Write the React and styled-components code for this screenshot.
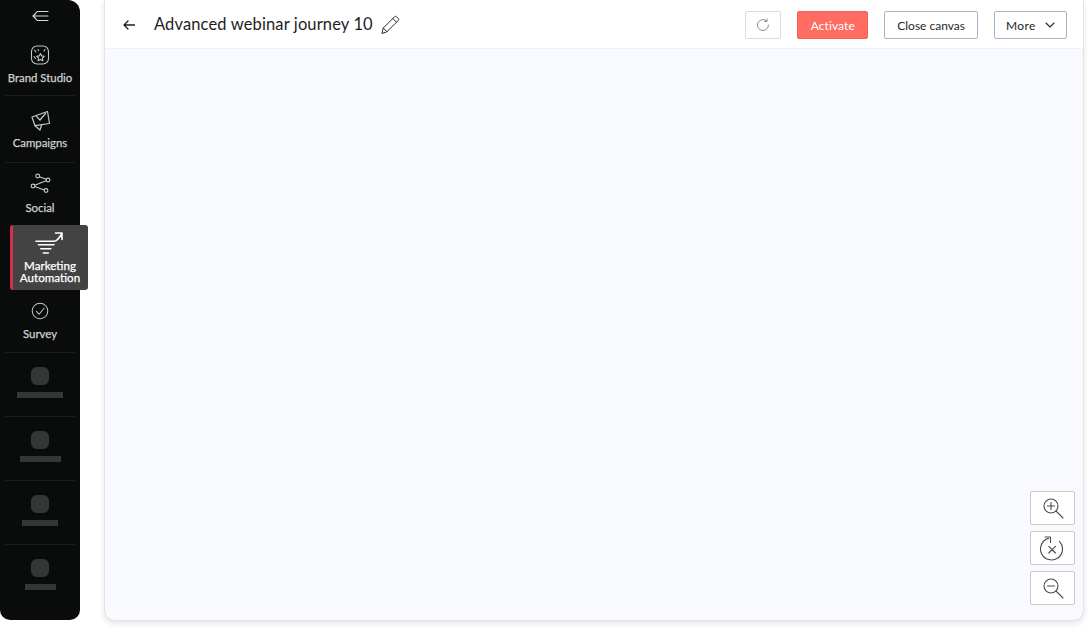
import React from 'react';
import styled, { createGlobalStyle } from 'styled-components';

const GlobalStyle = createGlobalStyle`
  html, body {
    margin: 0;
    padding: 0;
    background: #fff;
    font-family: 'Lato', 'Liberation Sans', sans-serif;
  }
`;

const Page = styled.div`
  display: flex;
  width: 1088px;
  height: 629px;
  overflow: hidden;
`;

const Sidebar = styled.nav`
  flex: none;
  width: 80px;
  height: 620px;
  display: flex;
  flex-direction: column;
  background: #0a0c0c;
  border-radius: 0 12px 10px 10px;
`;

const Toggle = styled.div`
  height: 32px;
  display: flex;
  justify-content: center;
  align-items: flex-start;
  padding-top: 9px;
  box-sizing: border-box;
  color: #d8d8d8;
`;

const NavItem = styled.div`
  height: ${(p) => p.$h}px;
  margin: 0 5px;
  box-sizing: border-box;
  display: flex;
  flex-direction: column;
  align-items: center;
  padding-top: ${(p) => p.$top || 12}px;
  color: #cfd1d1;
  border-bottom: 1px solid ${(p) => (p.$plain ? 'transparent' : '#1b1d1d')};
`;

const NavIcon = styled.div`
  height: 22px;
  display: flex;
  align-items: center;
  justify-content: center;
  color: #c6c8c8;
`;

const NavLabel = styled.div`
  margin-top: 4px;
  font-size: 11.4px;
  font-weight: 400;
  line-height: 15px;
  white-space: nowrap;
  -webkit-text-stroke: 0.25px currentColor;
`;

const ActiveItem = styled.div`
  flex: none;
  height: 65px;
  width: 78px;
  margin: 0 -8px 0 10px;
  position: relative;
  box-sizing: border-box;
  display: flex;
  flex-direction: column;
  align-items: center;
  padding: 3px 1px 0 0;
  background: #434343;
  border-left: 3px solid #d2334c;
  border-radius: 3px;
  color: #fff;
`;

const ActiveLabel = styled.div`
  margin-top: 2px;
  font-size: 11.6px;
  font-weight: 400;
  line-height: 12px;
  text-align: center;
  white-space: nowrap;
  -webkit-text-stroke: 0.25px currentColor;
`;

const SkeletonItem = styled.div`
  height: 64px;
  margin: 0 5px;
  box-sizing: border-box;
  display: flex;
  flex-direction: column;
  align-items: center;
  padding-top: 14px;
  border-bottom: 1px solid ${(p) => (p.$last ? 'transparent' : '#1b1d1d')};
`;

const SkeletonIcon = styled.div`
  width: 18px;
  height: 18px;
  border-radius: 6px;
  background: #353736;
`;

const SkeletonBar = styled.div`
  width: ${(p) => p.$w}px;
  height: 6px;
  margin-top: 7px;
  background: #353736;
`;

const Panel = styled.main`
  flex: none;
  position: relative;
  width: 980px;
  height: 621px;
  margin-left: 24px;
  box-sizing: border-box;
  display: flex;
  flex-direction: column;
  background: #f8faff;
  border: 1px solid #e3e3e6;
  border-top: none;
  border-radius: 0 0 10px 10px;
  box-shadow: 0 3px 6px rgba(0, 0, 0, 0.1);
`;

const Header = styled.header`
  flex: none;
  height: 49px;
  display: flex;
  align-items: center;
  padding: 2px 16px 0 17px;
  background: #fff;
  border-bottom: 1px solid #f1f2f6;
  box-sizing: border-box;
`;

const Title = styled.h1`
  margin: 0 7px 2px 18px;
  font-size: 16.5px;
  font-weight: 400;
  letter-spacing: 0.13px;
  color: #1d1d1f;
`;

const Actions = styled.div`
  margin-left: auto;
  display: flex;
  align-items: center;
  gap: 16px;
`;

const Button = styled.button`
  height: 28px;
  padding: 0 12px;
  display: flex;
  align-items: center;
  gap: 9px;
  box-sizing: border-box;
  font-family: inherit;
  font-size: 12px;
  color: #26272b;
  background: #fff;
  border: 1px solid #a7b4c9;
  border-radius: 2px;
`;

const MoreButton = styled(Button)`
  width: 73px;
  padding: 0 0 0 11px;
  letter-spacing: 0.4px;
`;

const ActivateButton = styled(Button)`
  width: 71px;
  padding: 0;
  justify-content: center;
  color: #fff;
  background: #ff6d62;
  border-color: #f0635a;
  letter-spacing: 0.1px;
`;

const RefreshButton = styled(Button)`
  width: 36px;
  padding: 0;
  justify-content: center;
  border-color: #dcdcdc;
  color: #8c8c8c;
`;

const ZoomControls = styled.div`
  position: absolute;
  right: 8px;
  bottom: 15px;
  display: flex;
  flex-direction: column;
  gap: 6px;
`;

const ZoomButton = styled.div`
  width: 45px;
  height: 34px;
  box-sizing: border-box;
  display: flex;
  align-items: center;
  justify-content: center;
  background: #fff;
  border: 1px solid #c9c9c9;
  border-radius: 2px;
  color: #4a4a4a;
`;

const Icon = ({ width = 24, height = 24, box = '0 0 24 24', w = 1.1, children }) => (
  <svg width={width} height={height} viewBox={box} fill="none" stroke="currentColor" strokeWidth={w} strokeLinecap="round" strokeLinejoin="round">
    {children}
  </svg>
);

const skeletonWidths = [46, 41, 36, 31];

export default function App() {
  return (
    <Page>
      <GlobalStyle />
      <Sidebar>
        <Toggle>
          <svg width="17" height="14" viewBox="0 0 17 14" fill="none" stroke="currentColor" strokeWidth="1.1" strokeLinecap="round" strokeLinejoin="round">
            <path d="M5 2.5h11M1 7h15M5 11.5h11M4.5 3.5L1 7l3.5 3.5" />
          </svg>
        </Toggle>
        <NavItem $h={64}>
          <NavIcon>
            <Icon width={30} height={26} box="0 0 30 26">
              <rect x="6.5" y="4" width="17" height="18" rx="5.5" />
              <path d="M15.5 11.500l1.200 2.400 2.600.4-1.900 1.800.5 2.600-2.400-1.300-2.400 1.300.5-2.600-1.900-1.800 2.600-.4z" />
              <path d="M9.500 8l1.500 2M20 7.500l-1 1.500M9 14.500l1.500 2M13 7.500l.6 1" />
            </Icon>
          </NavIcon>
          <NavLabel>Brand Studio</NavLabel>
        </NavItem>
        <NavItem $h={67} $top={13}>
          <NavIcon>
            <Icon width={30} height={28} box="0 1 30 28" w={1.2}>
              <path d="M7 12L22.500 6.500 24.500 18.500 10 20.700z" />
              <path d="M10 20.700l5 4.300 1.700-5.500" />
              <path d="M11.500 11.500l3.500 3.500 5.500-6.500" />
            </Icon>
          </NavIcon>
          <NavLabel>Campaigns</NavLabel>
        </NavItem>
        <NavItem $h={62} $top={11} $plain>
          <NavIcon>
            <Icon width={30} height={28} box="0 1 30 28">
              <circle cx="12.700" cy="6" r="1.900" />
              <circle cx="23" cy="10" r="1.900" />
              <circle cx="8" cy="16" r="1.900" />
              <circle cx="21" cy="20.500" r="1.900" />
              <path d="M14.500 6.700l6.700 2.600M21.200 10.700L9.800 15.300M9.800 16.600l9.400 3.300" />
            </Icon>
          </NavIcon>
          <NavLabel>Social</NavLabel>
        </NavItem>
        <ActiveItem>
          <svg width="40" height="30" viewBox="0 0 40 30" fill="none" stroke="currentColor" strokeWidth="1.600" strokeLinecap="round" strokeLinejoin="round">
            <path d="M6 13.300h17.500c3.500 0 5.500-2.800 8.500-8M25.500 5H32v6.500M8.500 16.800H24M10.800 20.800h10M13.300 25h5" />
          </svg>
          <ActiveLabel>Marketing<br />Automation</ActiveLabel>
        </ActiveItem>
        <NavItem $h={63} $top={10}>
          <NavIcon>
            <Icon width={22} height={22}>
              <circle cx="12" cy="12" r="8.500" />
              <path d="M8 12.500l3 3 5.500-6.500" />
            </Icon>
          </NavIcon>
          <NavLabel>Survey</NavLabel>
        </NavItem>
        {skeletonWidths.map((w, i) => (
          <SkeletonItem key={w} $last={i === skeletonWidths.length - 1}>
            <SkeletonIcon />
            <SkeletonBar $w={w} />
          </SkeletonItem>
        ))}
      </Sidebar>
      <Panel>
        <Header>
          <svg width="14" height="14" viewBox="0 0 14 14" fill="none" stroke="#1d1d1f" strokeWidth="1.300" strokeLinecap="round" strokeLinejoin="round">
            <path d="M12.500 7H2M6 3L2 7l4 4" />
          </svg>
          <Title>Advanced webinar journey 10</Title>
          <svg width="20" height="20" viewBox="0 0 20 20" fill="none" stroke="#2a2a2a" strokeWidth="1" strokeLinejoin="round" strokeLinecap="round">
            <path d="M2 18l1.300-5L14.500 1.800a1.500 1.500 0 0 1 2.100 0l1.600 1.600a1.500 1.500 0 0 1 0 2.100L7 16.700z" />
            <path d="M3.300 13L7 16.700M12.800 3.500l3.700 3.700" />
          </svg>
          <Actions>
            <RefreshButton aria-label="Refresh">
              <svg width="14" height="14" viewBox="0 0 14 14" fill="none" stroke="currentColor" strokeWidth="1" strokeLinecap="round" strokeLinejoin="round">
                <path d="M12.500 7A5.500 5.500 0 1 1 10.500 2.800M11 1v2.500H8.700" />
              </svg>
            </RefreshButton>
            <ActivateButton>Activate</ActivateButton>
            <Button>Close canvas</Button>
            <MoreButton>
              More
              <svg width="10" height="6" viewBox="0 0 10 6" fill="none" stroke="#26272b" strokeWidth="1.100" strokeLinecap="round" strokeLinejoin="round">
                <path d="M1 1l4 4 4-4" />
              </svg>
            </MoreButton>
          </Actions>
        </Header>
        <ZoomControls>
          <ZoomButton>
            <Icon>
              <circle cx="10" cy="10" r="7" />
              <path d="M15 15l7 7M10 6.500v7M6.500 10h7" />
            </Icon>
          </ZoomButton>
          <ZoomButton>
            <Icon width={26} height={26} box="4.500 2 26 26">
              <path d="M13 5.400A11 11 0 1 0 24 8.400" />
              <path d="M9.500 4H15v5.500M13.300 13.300l6.700 6.700M20 13.300L13.300 20" />
            </Icon>
          </ZoomButton>
          <ZoomButton>
            <Icon>
              <circle cx="10" cy="10" r="7" />
              <path d="M15 15l7 7M6.500 10h7" />
            </Icon>
          </ZoomButton>
        </ZoomControls>
      </Panel>
    </Page>
  );
}
